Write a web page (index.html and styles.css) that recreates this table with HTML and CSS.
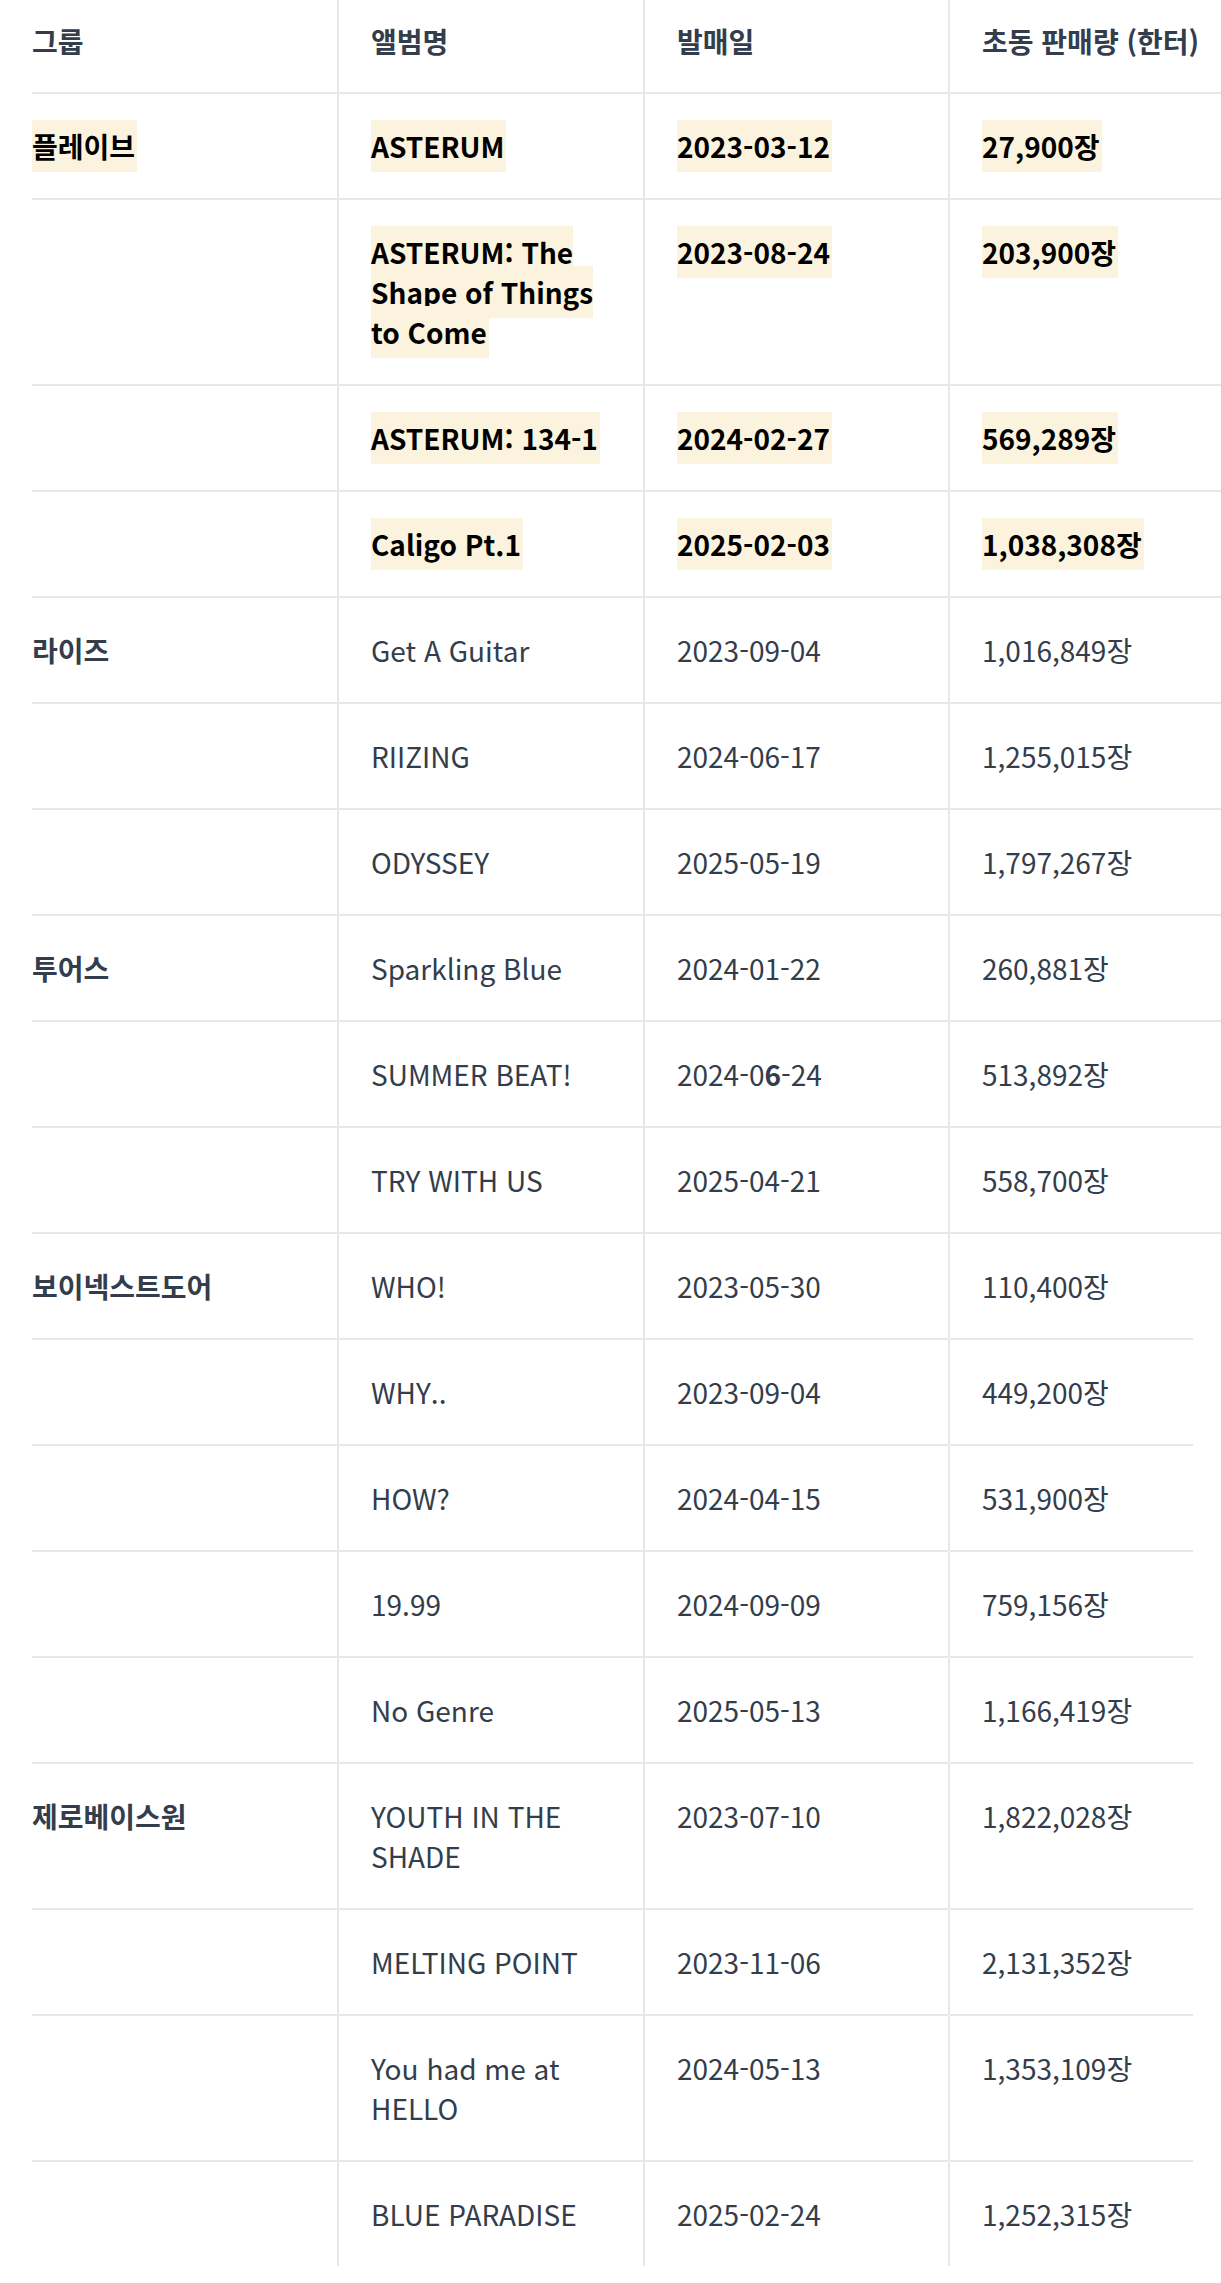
FILE: index.html
```html
<!DOCTYPE html>
<html lang="ko">
<head>
<meta charset="utf-8">
<title>초동 판매량</title>
<link rel="stylesheet" href="styles.css">
</head>
<body>
<div class="page">
  <table class="sales">
    <thead>
      <tr>
        <th>그룹</th>
        <th>앨범명</th>
        <th>발매일</th>
        <th>초동 판매량 (한터)</th>
      </tr>
    </thead>
    <tbody>
      <tr class="hl">
        <td class="grp"><span class="mark">플레이브</span></td>
        <td><span class="mark">ASTERUM</span></td>
        <td><span class="mark">2023-03-12</span></td>
        <td><span class="mark">27,900장</span></td>
      </tr>
      <tr class="hl">
        <td class="grp"></td>
        <td><span class="mark">ASTERUM: The Shape of Things to Come</span></td>
        <td><span class="mark">2023-08-24</span></td>
        <td><span class="mark">203,900장</span></td>
      </tr>
      <tr class="hl">
        <td class="grp"></td>
        <td><span class="mark">ASTERUM: 134-1</span></td>
        <td><span class="mark">2024-02-27</span></td>
        <td><span class="mark">569,289장</span></td>
      </tr>
      <tr class="hl">
        <td class="grp"></td>
        <td><span class="mark">Caligo Pt.1</span></td>
        <td><span class="mark">2025-02-03</span></td>
        <td><span class="mark">1,038,308장</span></td>
      </tr>
      <tr>
        <td class="grp">라이즈</td>
        <td>Get A Guitar</td>
        <td>2023-09-04</td>
        <td>1,016,849장</td>
      </tr>
      <tr>
        <td class="grp"></td>
        <td>RIIZING</td>
        <td>2024-06-17</td>
        <td>1,255,015장</td>
      </tr>
      <tr>
        <td class="grp"></td>
        <td>ODYSSEY</td>
        <td>2025-05-19</td>
        <td>1,797,267장</td>
      </tr>
      <tr>
        <td class="grp">투어스</td>
        <td>Sparkling Blue</td>
        <td>2024-01-22</td>
        <td>260,881장</td>
      </tr>
      <tr>
        <td class="grp"></td>
        <td>SUMMER BEAT!</td>
        <td>2024-0<b class="strong">6</b>-24</td>
        <td>513,892장</td>
      </tr>
      <tr>
        <td class="grp"></td>
        <td>TRY WITH US</td>
        <td>2025-04-21</td>
        <td>558,700장</td>
      </tr>
      <tr class="short">
        <td class="grp">보이넥스트도어</td>
        <td>WHO!</td>
        <td>2023-05-30</td>
        <td>110,400장</td>
      </tr>
      <tr class="short">
        <td class="grp"></td>
        <td>WHY..</td>
        <td>2023-09-04</td>
        <td>449,200장</td>
      </tr>
      <tr class="short">
        <td class="grp"></td>
        <td>HOW?</td>
        <td>2024-04-15</td>
        <td>531,900장</td>
      </tr>
      <tr class="short">
        <td class="grp"></td>
        <td>19.99</td>
        <td>2024-09-09</td>
        <td>759,156장</td>
      </tr>
      <tr class="short">
        <td class="grp"></td>
        <td>No Genre</td>
        <td>2025-05-13</td>
        <td>1,166,419장</td>
      </tr>
      <tr class="short">
        <td class="grp">제로베이스원</td>
        <td>YOUTH IN THE SHADE</td>
        <td>2023-07-10</td>
        <td>1,822,028장</td>
      </tr>
      <tr class="short">
        <td class="grp"></td>
        <td>MELTING POINT</td>
        <td>2023-11-06</td>
        <td>2,131,352장</td>
      </tr>
      <tr class="short">
        <td class="grp"></td>
        <td>You had me at HELLO</td>
        <td>2024-05-13</td>
        <td>1,353,109장</td>
      </tr>
      <tr class="last">
        <td class="grp"></td>
        <td>BLUE PARADISE</td>
        <td>2025-02-24</td>
        <td>1,252,315장</td>
      </tr>
    </tbody>
  </table>
</div>
</body>
</html>
```

FILE: styles.css
```css
html, body {
  margin: 0;
  padding: 0;
  background: #ffffff;
}

.page {
  width: 1221px;
  overflow: hidden;
  padding-left: 32px;
  box-sizing: border-box;
  font-family: "Noto Sans CJK KR", "Noto Sans", sans-serif;
  color: #333d4b;
  font-size: 28px;
  line-height: 40px;
}

.sales {
  width: 1221px;
  table-layout: fixed;
  border-collapse: separate;
  border-spacing: 0;
}

.sales th,
.sales td {
  box-sizing: border-box;
  width: 305px;
  text-align: left;
  vertical-align: top;
  padding: 32px 32px 32px 32px;
  border-bottom: 2px solid #e5e7eb;
  border-left: 2px solid #e5e7eb;
}

.sales th:first-child,
.sales td:first-child {
  padding-left: 0;
  border-left: none;
}

.sales th:nth-child(2) {
  width: 306px;
}

.sales th {
  font-weight: 700;
  padding-top: 21px;
  padding-bottom: 31px;
  white-space: nowrap;
}

.grp {
  font-weight: 700;
}

.strong {
  font-weight: 700;
}

.hl td {
  color: #000000;
  font-weight: 700;
}

.mark {
  background: #fbf3dd;
  padding: 6px 2px 6px 0;
}

.short td:last-child {
  border-bottom-color: transparent;
  background-image: linear-gradient(#e5e7eb, #e5e7eb);
  background-origin: border-box;
  background-repeat: no-repeat;
  background-position: left bottom;
  background-size: 245px 2px;
}

.last td {
  border-bottom: none;
}
```
